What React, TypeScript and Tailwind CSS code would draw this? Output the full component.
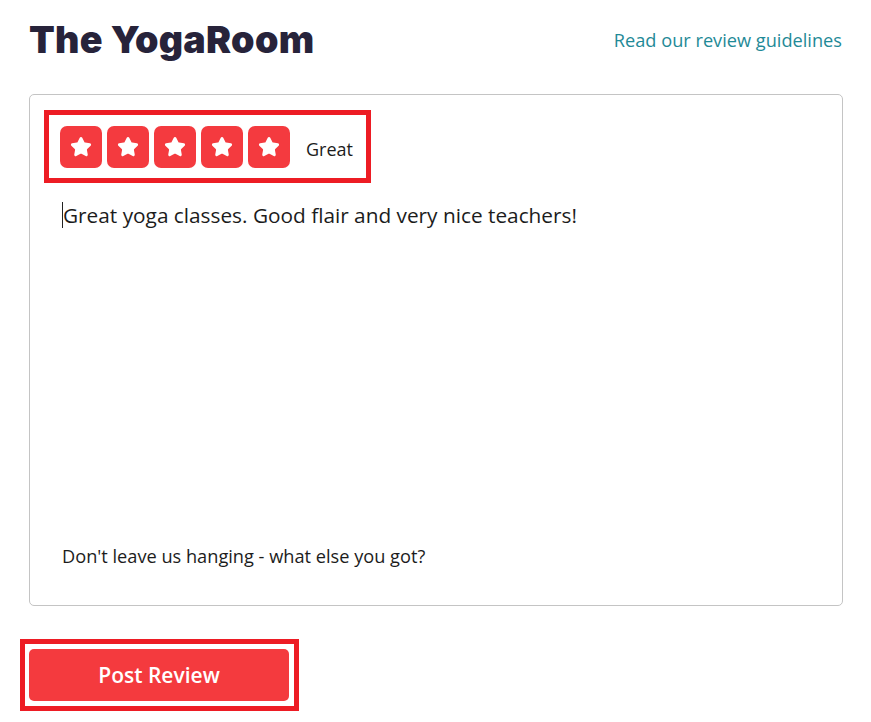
/////////////////////////////// IMPORTS ///////////////////////////////

import { Star } from "lucide-react";


/////////////////////////////// PAGE ///////////////////////////////

export default function App () {

  // five filled star tiles
  const stars = [1, 2, 3, 4, 5];

  return (
    <div className="w-[871px] h-[722px] bg-white pl-[29px] pr-[28px] pt-[18px] font-['Open_Sans',sans-serif] text-[#1c1c1c]">

      {/* Header */}
      <div className="flex flex-row h-[44px] items-center justify-between">
        <h1 className="text-[37.6px] font-black tracking-[0.3px] text-[#27233a] font-['Inter',sans-serif] leading-none">
          The YogaRoom
        </h1>
        <a className="mr-[1px] text-[18.2px] text-[#1f8a97] leading-none">Read our review guidelines</a>
      </div>

      {/* Review card */}
      <div className="mt-[32px] flex flex-col h-[512px] border border-[#c4c4c4] rounded-[5px] pl-[14px] pt-[15px] pb-[35px]">

        {/* rating */}
        <div className="self-start flex flex-row items-center border-[5px] border-[#ed1c24] pl-[11px] pr-[13px] pt-[11px] pb-[10px]">
          <div className="flex flex-row gap-[5px]">
            {stars.map(s => (
              <div key={s} className="flex w-[42px] h-[42px] items-center justify-center rounded-[7px] bg-[#f43a3f]">
                <Star size={22} fill="white" color="white" strokeWidth={2} strokeLinejoin="round" />
              </div>
            ))}
          </div>
          <span className="ml-[16px] mt-[4px] text-[18px] leading-none">Great</span>
        </div>

        {/* text */}
        <div className="flex-1 mt-[19px] ml-[18px]">
          <p className="border-l border-[#222] text-[20.8px] leading-[26px]">
            Great yoga classes. Good flair and very nice teachers!
          </p>
        </div>

        {/* prompt */}
        <p className="ml-[18px] text-[18.2px]">Don't leave us hanging - what else you got?</p>
      </div>

      {/* Button */}
      <div className="mt-[33px] ml-[-9px] inline-flex border-[5px] border-[#ed1c24] pl-[4px] pr-[5px] py-[5px]">
        <button className="w-[260px] h-[52px] pt-[2px] rounded-[5px] bg-[#f43a3e] text-white text-[21px] font-semibold">
          Post Review
        </button>
      </div>
    </div>
  );
}
